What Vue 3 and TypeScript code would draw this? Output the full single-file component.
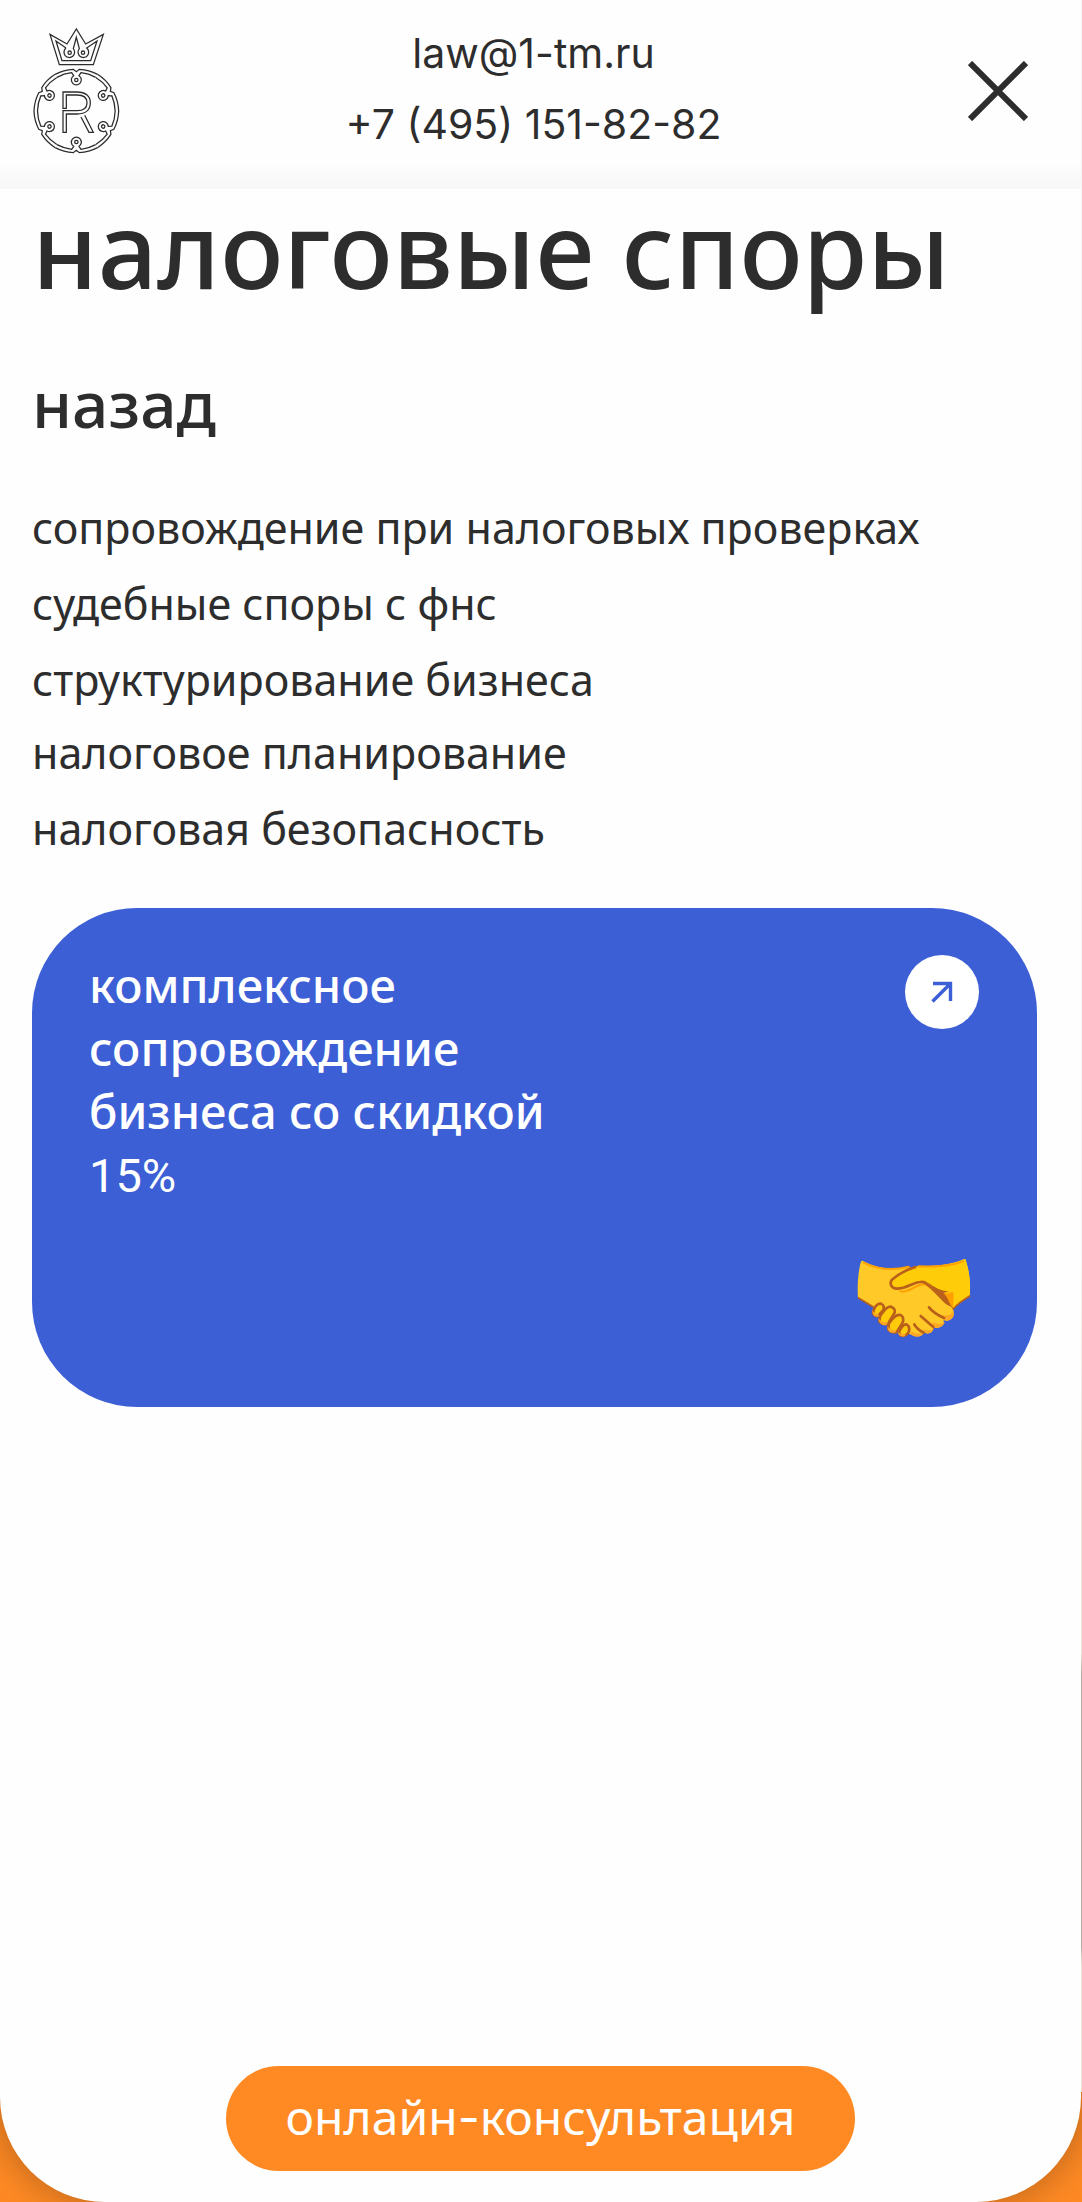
<script setup lang="ts">
const services: string[] = [
  'сопровождение при налоговых проверках',
  'судебные споры с фнс',
  'структурирование бизнеса',
]
const planning: string[] = ['налоговое планирование', 'налоговая безопасность']
const ringAngles: number[] = [0, 60, 120, 180, 240, 300]
</script>

<template>
  <div class="page">
    <div class="panel">
      <header class="header">
        <a class="logo" href="#" aria-label="На главную">
          <svg viewBox="36 36 267 381" width="89" height="127" fill="none" stroke="#2d2d2d" stroke-width="3.8">
            <path d="M90 58L118 149H220L250 58L197 87L169 42L141 87Z" />
            <path d="M138 99L108 78L126 137H212L231 78L200 99A16 16 0 1 1 178 101L169 67L160 101A16 16 0 1 1 138 99" />
            <circle cx="149" cy="113" r="5" />
            <circle cx="189" cy="113" r="5" />
            <g transform="translate(169 288)">
              <g v-for="angle in ringAngles" :key="angle" :transform="`rotate(${angle})`">
                <path d="M-63.5 -110A129 129 0 0 1 -9 -125L0 -118L9 -125A129 129 0 0 1 63.5 -110" />
                <path d="M-58 -101A117 117 0 0 1 -14 -115L-8 -106A15 15 0 1 0 8 -106L14 -115A117 117 0 0 1 58 -101" />
                <circle cx="0" cy="-93" r="5" />
              </g>
            </g>
            <path d="M129 280V231H171C198 231 211 245 211 263C211 283 198 297 171 297H139V352H129V287H171C190 287 201 278 201 263C201 249 190 240 171 240H139V280Z" />
            <path d="M183 306L207 352H220L194 301" />
          </svg>
        </a>
        <address class="contacts">
          <a href="mailto:law@1-tm.ru">law@1-tm.ru</a>
          <a href="tel:+74951518282">+7 (495) 151-82-82</a>
        </address>
        <button class="close" type="button" aria-label="Закрыть меню">
          <svg viewBox="0 0 60 60" width="60" height="60" stroke="#2d2d2d" stroke-width="6">
            <path d="M2 2L58 58M58 2L2 58" />
          </svg>
        </button>
      </header>

      <main class="content">
        <h1 class="title">налоговые споры</h1>
        <button class="back" type="button">назад</button>
        <nav aria-label="Налоговые споры">
          <ul class="list list-clipped">
            <li v-for="item in services" :key="item"><a href="#">{{ item }}</a></li>
          </ul>
          <ul class="list">
            <li v-for="item in planning" :key="item"><a href="#">{{ item }}</a></li>
          </ul>
        </nav>

        <a class="card" href="#">
          <span class="card-top">
            <span class="card-text">комплексное сопровождение бизнеса со скидкой <span class="percent">15%</span></span>
            <span class="arrow">
              <svg viewBox="0 0 22 22" width="22" height="22" fill="none" stroke="#3c5fd6" stroke-width="3.4">
                <path d="M2 2.5H19.5V20M19.5 2.5L1.5 20.5" />
              </svg>
            </span>
          </span>
          <svg class="handshake" viewBox="50 85 342 240" width="114" height="80" fill="none" stroke-linecap="round" stroke-linejoin="round">
            <path fill="#ffca28" d="M68 94C63 91 61 96 58 112C52 145 51 175 53 205L101 233L220 310L250 300L318 262L334 235L388 198C392 160 386 125 376 90C374 87 371 88 368 91C330 108 290 109 230 110C160 125 110 116 68 94Z" />
            <path fill="#ffcc0a" d="M225 112C280 109 330 107 370 89C374 87 376 89 377 94C388 128 391 160 388 198C372 208 352 222 338 239L318 212L265 160Q242 148 205 170Q165 190 152 165Q144 145 225 112Z" />
            <path stroke="#ffa000" stroke-width="6" d="M70 99C110 119 160 123 205 111M235 110C290 112 340 106 368 95M180 185C205 190 222 170 241 165Q258 161 269 174" />
            <path fill="#ffa000" d="M281 177Q309 195 330 189Q345 175 337 236L318 212Z" />
            <path fill="#b9601a" d="M262 158Q300 188 328 184Q314 189 309 190Q325 205 334 237Z" />
            <path stroke="#b9601a" stroke-width="8" d="M225 112C190 123 172 135 154 151C147 162 153 176 169 177C197 178 218 158 240 157C257 153 267 170 282 183L334 236" />
            <path stroke="#b9601a" stroke-width="5" d="M55 205L98 231M388 199Q358 217 338 238" />
            <path fill="#ffca28" d="M235 180L333 232Q347 252 335 266Q323 278 310 270Q313 292 293 294Q283 297 278 290Q281 313 258 311L250 307Q242 325 221 319L202 311L176 240Z" />
            <path fill="#ffa726" d="M338 238Q340 260 307 257L309 270Q321 277 333 268Q345 258 338 238ZM313 276Q297 290 277 277V290Q287 298 300 291Q312 286 313 276ZM280 294Q270 306 250 299V307Q263 315 273 308Q281 302 280 294ZM251 306Q233 318 211 304L212 315Q235 326 246 316Z" />
            <g fill="#ffca0a" stroke="#b9601a" stroke-width="8">
              <path d="M101 239Q109 220 122 222Q135 229 128 242L113 259Q103 261 98 250Z" />
              <path d="M119 260Q139 228 152 231Q169 238 161 253L143 282Q129 286 117 276Z" />
              <path d="M145 283Q164 252 181 256Q194 265 186 281L169 307Q155 312 144 300Z" />
              <path d="M176 306Q189 280 200 285Q212 294 203 311Q193 322 180 317Z" />
            </g>
            <path fill="#ffa726" d="M96 239Q97 252 117 256L113 261Q95 263 96 239ZM114 265Q123 280 143 278L138 286Q117 290 114 265ZM141 289Q150 305 169 301L164 309Q142 313 141 289ZM173 308Q184 316 198 313L191 321Q175 321 173 308Z" />
            <path stroke="#b9601a" stroke-width="8" d="M266 233Q279 250 311 265M241 259L279 292M222 284Q229 298 250 309" />
          </svg>
        </a>
      </main>

      <footer class="footer">
        <button class="consult" type="button">онлайн<span class="dash">-</span>консультация</button>
      </footer>
    </div>
  </div>
</template>

<style>
body {
  margin: 0;
}
</style>

<style scoped>
* {
  box-sizing: border-box;
}
.page {
  position: relative;
  min-height: 100vh;
  display: flex;
  padding-right: 1px;
  overflow: hidden;
  background: #ff8a24;
  color: #2d2d2d;
  font-family: "Noto Sans", sans-serif;
}
/* hairline scroll track along the right edge */
.page::after {
  content: "";
  position: absolute;
  top: 0;
  right: 0;
  width: 1px;
  height: 95%;
  background: linear-gradient(#f4f4f4 60%, #f0e4d8 70%, #f0e4d8 79%, #b8aca2 80%, #b8aca2 93%, #f0e4d8 94%);
}
.panel {
  flex: 1;
  min-width: 0;
  display: flex;
  flex-direction: column;
  background: #fefefe;
  border-radius: 0 0 105px 105px;
  box-shadow: 0 0 40px rgba(0, 0, 0, 0.3);
}
.header {
  height: 189px;
  padding: 0 53px 8px 32px;
  display: flex;
  align-items: center;
  justify-content: space-between;
  background: linear-gradient(#fefefe 86%, #f7f7f7 100%);
}
.logo,
.logo svg,
.close svg {
  display: block;
}
.contacts {
  display: flex;
  flex-direction: column;
  align-items: center;
  margin-right: 22px;
  padding-bottom: 3px;
  font: normal 41px/71px "Inter", sans-serif;
}
.contacts a,
.list a {
  color: inherit;
  text-decoration: none;
}
.close {
  padding: 0;
  border: 0;
  background: none;
}
.content {
  padding: 0 44px 0 32px;
}
.title {
  margin: 0;
  font-size: 105px;
  font-weight: 500;
  line-height: 120px;
}
.back {
  display: block;
  width: 100%;
  margin: 60px 0 56px;
  padding: 0;
  border: 0;
  background: none;
  color: inherit;
  font: 500 64px/70px "Noto Sans", sans-serif;
  text-align: left;
}
.list {
  display: flex;
  flex-direction: column;
  gap: 26px;
  margin: 0;
  padding: 0;
  list-style: none;
  font-size: 43px;
  line-height: 50px;
}
.list-clipped {
  margin-bottom: 23px;
  padding-top: 8px;
  overflow: hidden;
}
.card {
  display: flex;
  flex-direction: column;
  justify-content: space-between;
  min-height: 499px;
  margin-top: 54px;
  padding: 46px 58px 69px 57px;
  border-radius: 105px;
  background: #3c5fd6;
  color: #fff;
  text-decoration: none;
}
.card-top {
  display: flex;
  align-items: flex-start;
  justify-content: space-between;
}
.card-text {
  width: 60%;
  max-width: 480px;
  font-size: 47px;
  font-weight: 500;
  line-height: 63px;
}
.percent {
  font-family: "Roboto", sans-serif;
  font-weight: 400;
}
.dash {
  font-family: "Inter", sans-serif;
}
.arrow {
  display: flex;
  align-items: center;
  justify-content: center;
  width: 74px;
  height: 74px;
  margin-top: 1px;
  border-radius: 50%;
  background: #fff;
}
.handshake {
  align-self: flex-end;
  margin-right: 8px;
}
.footer {
  display: flex;
  justify-content: center;
  margin-top: auto;
  padding: 32px 0 31px;
}
.consult {
  height: 105px;
  padding: 0 60px 4px;
  border: 0;
  border-radius: 53px;
  background: #ff8a24;
  color: #fff;
  font: 400 48px/63px "Noto Sans", sans-serif;
}
</style>
